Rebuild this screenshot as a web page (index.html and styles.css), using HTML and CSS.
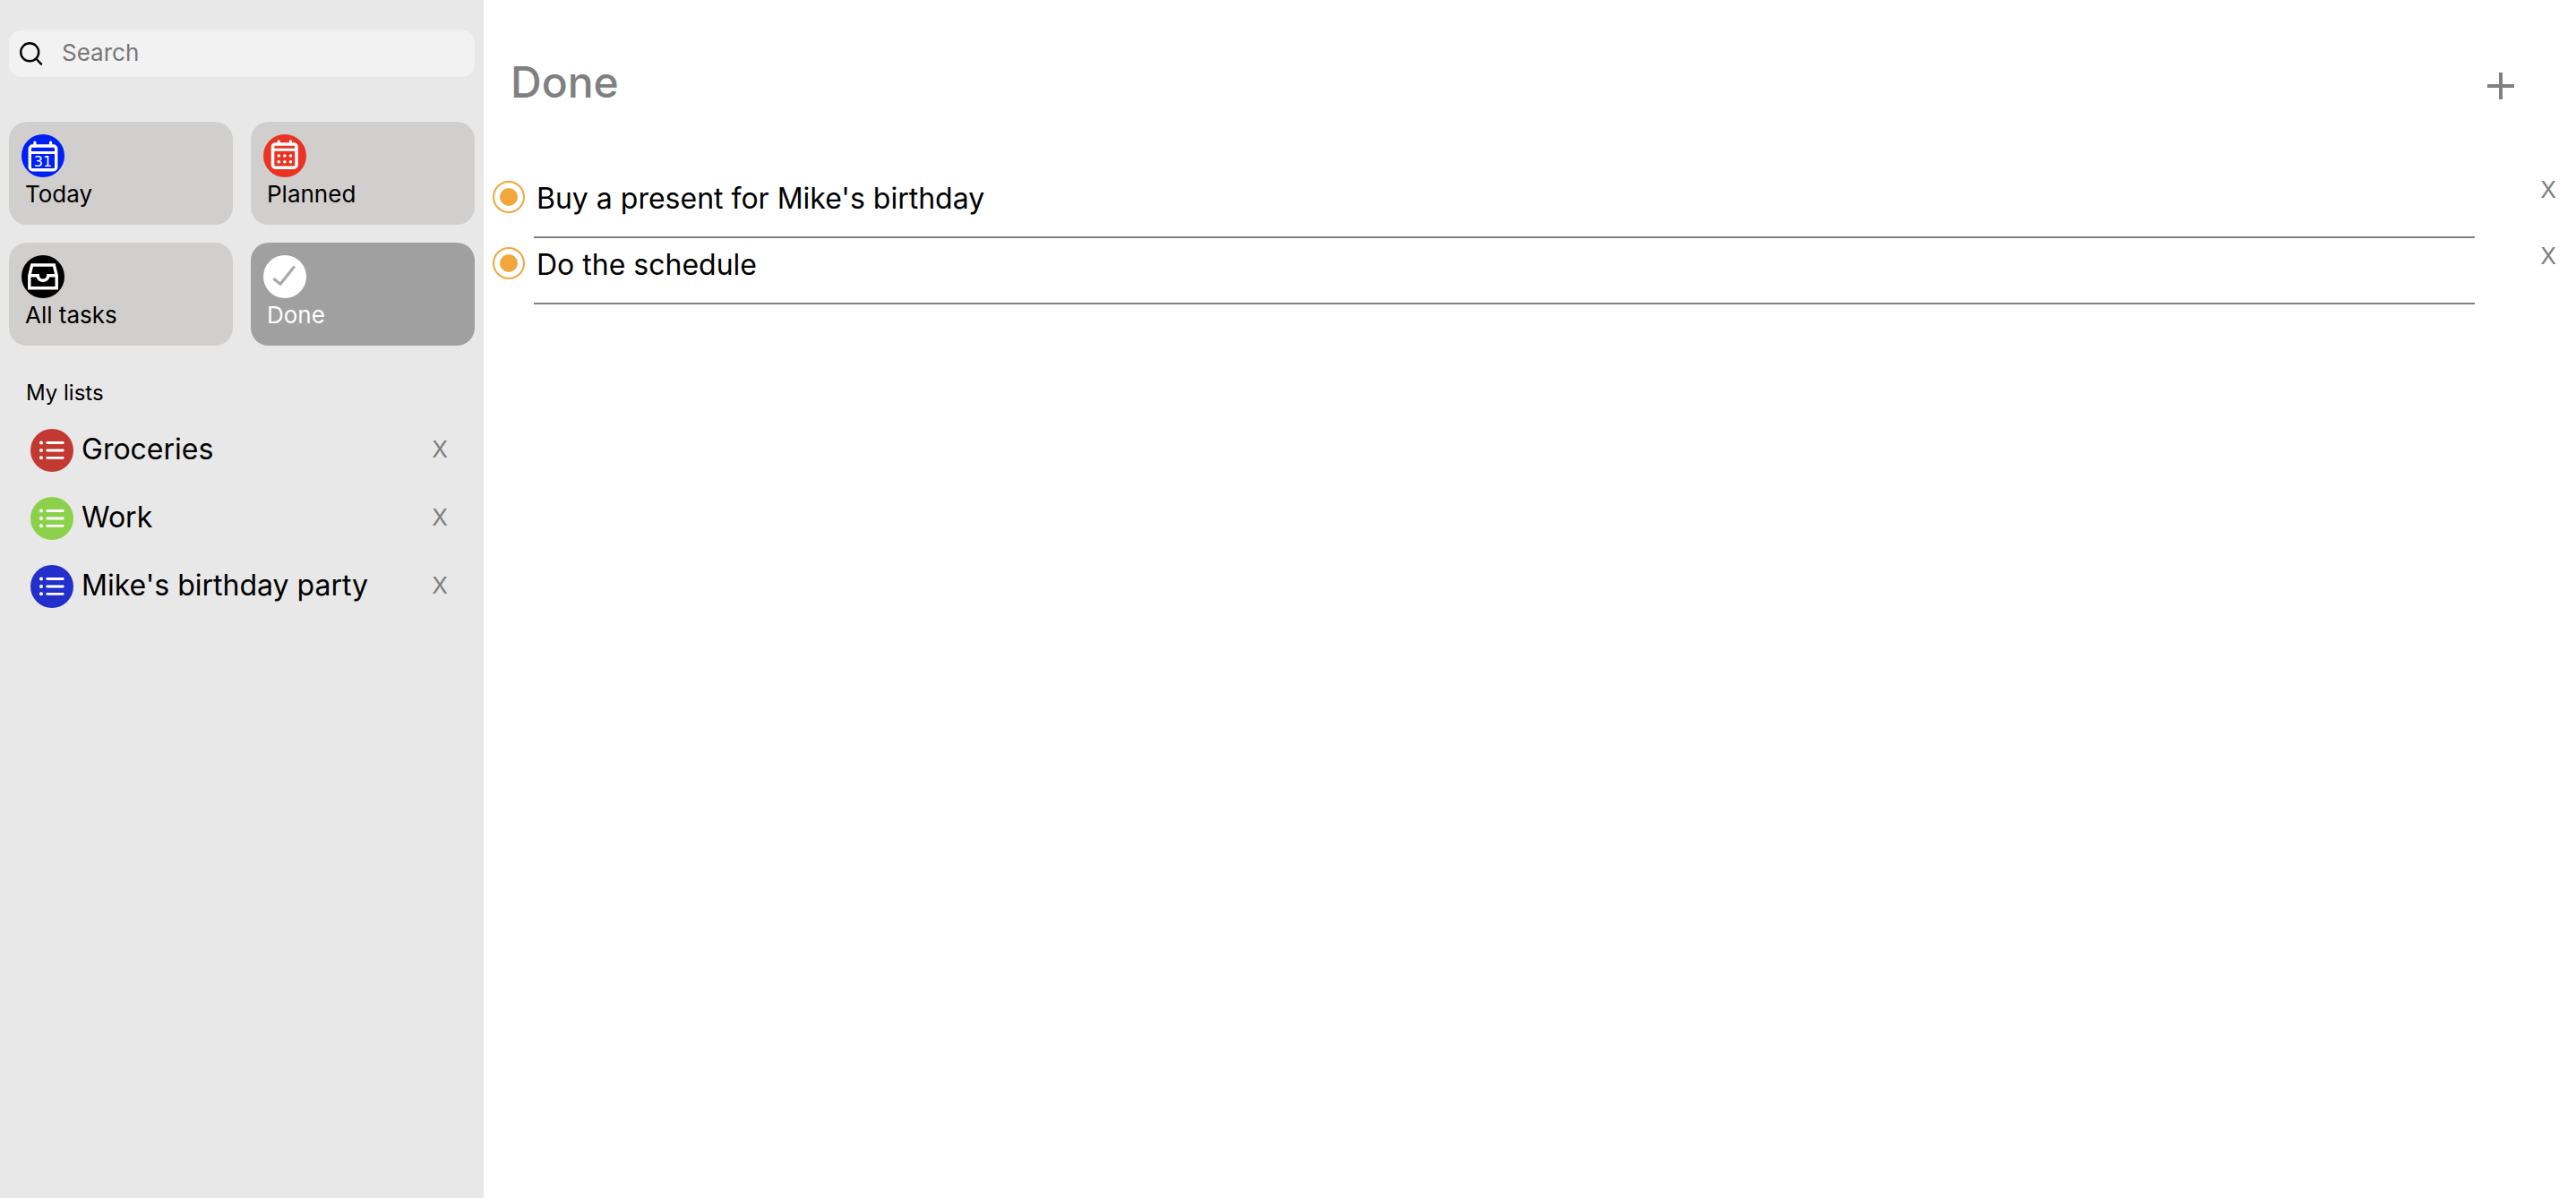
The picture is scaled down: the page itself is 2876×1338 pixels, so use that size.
FILE: index.html
```html
<!DOCTYPE html>
<html lang="en">
<head>
<meta charset="utf-8">
<meta name="viewport" content="width=device-width, initial-scale=1">
<title>Tasks</title>
<link rel="stylesheet" href="styles.css">
</head>
<body>
<svg class="sprite" aria-hidden="true">
  <symbol id="icon-list" viewBox="0 0 48 48">
    <g fill="currentColor"><circle cx="12" cy="15.5" r="2"/><circle cx="12" cy="24" r="2"/><circle cx="12" cy="32.3" r="2"/></g>
    <path d="M18.7 15.5H36.3M18.7 24H36.3M18.7 32.3H36.3" fill="none" stroke="currentColor" stroke-width="2.8" stroke-linecap="round"/>
  </symbol>
</svg>
<div class="app">
  <aside class="sidebar">
    <label class="search">
      <svg class="search-icon" viewBox="0 0 28 28" aria-hidden="true"><circle cx="13.2" cy="12.3" r="10"/><path d="M20.3 19.5 26 25.6"/></svg>
      <input class="search-input" type="search" placeholder="Search" aria-label="Search">
    </label>
    <nav class="cards">
      <button class="card" type="button">
        <svg class="badge badge-today" viewBox="0 0 48 48" aria-hidden="true">
          <rect x="9.3" y="13" width="29.4" height="26.7" rx="3" stroke-width="3.4"/>
          <path d="M9.3 20.4H38.7" stroke-width="3"/>
          <path d="M14.9 9V13M32.6 9V13" stroke-width="3.2" stroke-linecap="round"/>
          <text class="badge-day" x="24" y="35.5" text-anchor="middle">31</text>
        </svg>
        <span class="card-label">Today</span>
      </button>
      <button class="card" type="button">
        <svg class="badge badge-planned" viewBox="0 0 48 48" aria-hidden="true">
          <rect x="10.5" y="11" width="26.5" height="26.2" rx="3" stroke-width="3.6"/>
          <path d="M10.5 17.2H37" stroke-width="3"/>
          <path d="M17.2 7.8V11M30.5 7.8V11" stroke-width="3.2" stroke-linecap="round"/>
          <path d="M17.2 24H17.3M23.8 24H23.9M30.4 24H30.5M17.2 30.7H17.3M23.8 30.7H23.9M30.4 30.7H30.5" stroke-width="3.6" stroke-linecap="round"/>
        </svg>
        <span class="card-label">Planned</span>
      </button>
      <button class="card" type="button">
        <svg class="badge badge-all" viewBox="0 0 48 48" aria-hidden="true">
          <path d="M8.8 22.8 11.7 11H36.3L39.2 22.8V36.8H8.8Z" stroke-width="3.4"/>
          <path d="M8.8 22.8H18.2C18.5 30.2 29.5 30.2 29.8 22.8H39.2" stroke-width="3.6"/>
        </svg>
        <span class="card-label">All tasks</span>
      </button>
      <button class="card card-active" type="button" aria-current="page">
        <svg class="badge badge-done" viewBox="0 0 48 48" aria-hidden="true">
          <path d="M12.3 27 19 32.3 34 13.6" stroke-width="3.2" stroke-linecap="round" stroke-linejoin="round"/>
        </svg>
        <span class="card-label">Done</span>
      </button>
    </nav>
    <h2 class="lists-title">My lists</h2>
    <ul class="lists">
      <li class="list">
        <svg class="badge badge-red" aria-hidden="true"><use href="#icon-list"/></svg>
        <a class="list-name" href="#groceries">Groceries</a>
        <button class="delete list-delete" type="button" aria-label="Delete Groceries">X</button>
      </li>
      <li class="list">
        <svg class="badge badge-green" aria-hidden="true"><use href="#icon-list"/></svg>
        <a class="list-name" href="#work">Work</a>
        <button class="delete list-delete" type="button" aria-label="Delete Work">X</button>
      </li>
      <li class="list">
        <svg class="badge badge-blue" aria-hidden="true"><use href="#icon-list"/></svg>
        <a class="list-name" href="#party">Mike's birthday party</a>
        <button class="delete list-delete" type="button" aria-label="Delete Mike's birthday party">X</button>
      </li>
    </ul>
  </aside>
  <main class="main">
    <header class="header">
      <h1 class="title">Done</h1>
      <button class="add" type="button" aria-label="Add task">
        <svg class="add-icon" viewBox="0 0 30 30" aria-hidden="true"><path d="M15 0V30M0 15H30"/></svg>
      </button>
    </header>
    <ul class="tasks">
      <li class="task">
        <input class="task-check" type="radio" id="task-1" name="task-1" checked>
        <label class="task-name" for="task-1">Buy a present for Mike's birthday</label>
        <button class="delete task-delete" type="button" aria-label="Delete task">X</button>
      </li>
      <li class="task">
        <input class="task-check" type="radio" id="task-2" name="task-2" checked>
        <label class="task-name" for="task-2">Do the schedule</label>
        <button class="delete task-delete" type="button" aria-label="Delete task">X</button>
      </li>
    </ul>
  </main>
</div>
</body>
</html>
```
FILE: styles.css
```css
* {
  box-sizing: border-box;
}

body {
  margin: 0;
  background: #fff;
  color: #000;
  font-family: Inter, "Noto Sans", sans-serif;
  font-size: 32px;
}

button,
input {
  font: inherit;
  color: inherit;
}

button {
  padding: 0;
  border: 0;
  background: none;
  cursor: pointer;
}

ul {
  margin: 0;
  padding: 0;
  list-style: none;
}

.sprite {
  display: none;
}

.app {
  display: flex;
  min-height: 100vh;
}

/* Sidebar */
.sidebar {
  flex: none;
  width: 540px;
  padding: 34px 10px;
  background: #e8e8e8;
}

.search {
  display: flex;
  align-items: center;
  gap: 21px;
  height: 52px;
  padding: 0 10px;
  border-radius: 14px;
  background: #f2f2f2;
}

.search-icon {
  flex: none;
  width: 28px;
  height: 28px;
  fill: none;
  stroke: #000;
  stroke-width: 2.4;
  stroke-linecap: round;
}

.search-input {
  flex: 1;
  min-width: 0;
  padding: 0 0 2px;
  border: 0;
  outline: 0;
  background: none;
  font-size: 26px;
  line-height: 36px;
}

.search-input::placeholder {
  color: #777;
}

.cards {
  display: grid;
  grid-template-columns: 1fr 1fr;
  gap: 20px;
  margin-top: 50px;
}

.card {
  display: flex;
  flex-direction: column;
  align-items: flex-start;
  padding: 14px 14px 15px;
  border-radius: 20px;
  background: #d0cfcd;
  text-align: left;
}

.card-active {
  background: #a0a0a0;
  color: #fff;
}

.card-label {
  padding-left: 4px;
  font-size: 26px;
  line-height: 38px;
}

.badge {
  flex: none;
  width: 48px;
  height: 48px;
  border-radius: 50%;
  color: #fff;
  fill: none;
  stroke: #fff;
}

.badge use {
  stroke: none;
}

.badge-day {
  fill: #fff;
  stroke: none;
  font: 16px "DejaVu Sans", sans-serif;
}

.badge-today { background: #0020f5; }
.badge-planned { background: #ea3323; }
.badge-all { background: #000; }
.badge-done { background: #fff; stroke: #a9a9a9; }
.badge-red { background: #c23931; }
.badge-green { background: #8bd14c; }
.badge-blue { background: #232fcb; }

.lists-title {
  margin: 35px 0 8px;
  padding-left: 19px;
  font-size: 24px;
  font-weight: 400;
  line-height: 36px;
}

.list {
  display: flex;
  align-items: center;
  height: 76px;
  padding: 0 14px 0 24px;
}

.list-name {
  flex: 1;
  padding: 0 0 2px 9px;
  color: inherit;
  line-height: 40px;
  text-decoration: none;
}

.delete {
  color: #808080;
  font-size: 26px;
  line-height: 40px;
}

.list-delete {
  width: 50px;
  padding-bottom: 2px;
}

/* Task area */
.main {
  flex: 1;
  padding-top: 60px;
}

.header {
  display: flex;
  align-items: flex-end;
  justify-content: space-between;
  padding: 0 56px 0 30px;
  color: #808080;
}

.title {
  margin: 0;
  font-size: 48px;
  font-weight: 500;
  line-height: 64px;
}

.add {
  display: grid;
  place-items: center;
  width: 56px;
  height: 56px;
}

.add-icon {
  width: 30px;
  height: 30px;
  stroke: #808080;
  stroke-width: 4;
}

.tasks {
  margin-top: 68px;
}

.task {
  display: flex;
  align-items: flex-start;
  padding-left: 10px;
}

/* The dot fills the content box, inside the padding and the ring. */
.task-check {
  flex: none;
  appearance: none;
  width: 36px;
  height: 36px;
  margin: 10px 10px 0 0;
  padding: 6px;
  border: 2px solid #f2a73d;
  border-radius: 50%;
  background: #f2a73d content-box;
}

.task-name {
  flex: 1;
  padding: 2px 0 14px 3px;
  border-bottom: 2px solid #808080;
  line-height: 56px;
}

.task-delete {
  width: 62px;
  margin-left: 51px;
}
```
